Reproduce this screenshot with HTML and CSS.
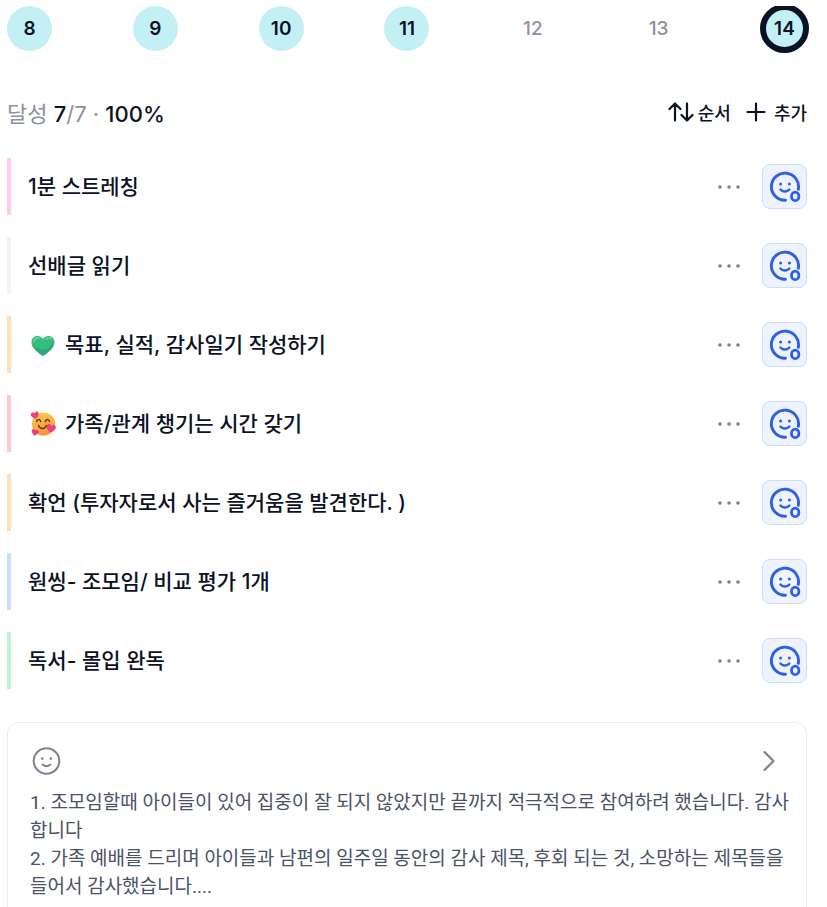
FILE: index.html
```html
<!DOCTYPE html>
<html lang="ko">
  <head>
    <meta charset="UTF-8" />
    <meta name="viewport" content="width=device-width, initial-scale=1.0" />
    <title>루틴</title>
    <link rel="stylesheet" href="styles.css">
  </head>
  <body>
    <!-- Shared icons -->
    <svg class="sprite" aria-hidden="true">
      <symbol id="icon-done" viewBox="0 0 32 32">
        <g fill="none" stroke="currentColor" stroke-linecap="round">
          <path d="M16.500 29.300A13.600 13.600 0 1 1 29.300 18.400" stroke-width="2.900" />
          <path d="M11.500 18.600q4.400 3.800 8.800 0" stroke-width="2.400" />
          <ellipse cx="26.200" cy="25.400" rx="3.700" ry="4.200" stroke-width="2.800" />
        </g>
        <circle cx="11.600" cy="13" r="1.500" fill="currentColor" />
        <circle cx="20.400" cy="13" r="1.500" fill="currentColor" />
      </symbol>
      <symbol id="icon-more" viewBox="0 0 24 6">
        <g fill="currentColor">
          <circle cx="3" cy="3" r="1.8" />
          <circle cx="12" cy="3" r="1.8" />
          <circle cx="21" cy="3" r="1.8" />
        </g>
      </symbol>
    </svg>

    <div class="app">
      <nav class="days">
        <button class="day done">8</button>
        <button class="day done">9</button>
        <button class="day done">10</button>
        <button class="day done">11</button>
        <button class="day">12</button>
        <button class="day">13</button>
        <button class="day done today">14</button>
      </nav>

      <header class="summary">
        <p class="progress">달성 <strong>7</strong>/7 · <strong>100%</strong></p>
        <div class="actions">
          <button class="action">
            <svg width="26" height="20" viewBox="0 0 26 20" fill="none" stroke="currentColor" stroke-width="2.2" stroke-linecap="round" stroke-linejoin="round" aria-hidden="true">
              <path d="M7 18.500V1.500M1.500 7L7 1.500 12.500 7M19 1.500v17M13.500 13l5.500 5.500 5.500-5.500" />
            </svg>
            순서
          </button>
          <button class="action add">
            <svg width="20" height="20" viewBox="0 0 20 20" fill="none" stroke="currentColor" stroke-width="2.2" stroke-linecap="round" aria-hidden="true">
              <path d="M10 1.500v17M1.500 10h17" />
            </svg>
            추가
          </button>
        </div>
      </header>

      <ul class="routines">
        <li class="routine pink">
          <span class="title">1분 스트레칭</span>
          <button class="more" aria-label="더보기"><svg><use href="#icon-more" /></svg></button>
          <button class="check" aria-label="완료"><svg><use href="#icon-done" /></svg></button>
        </li>
        <li class="routine gray">
          <span class="title">선배글 읽기</span>
          <button class="more" aria-label="더보기"><svg><use href="#icon-more" /></svg></button>
          <button class="check" aria-label="완료"><svg><use href="#icon-done" /></svg></button>
        </li>
        <li class="routine orange">
          <svg class="emoji" viewBox="0 0 26 26" aria-hidden="true">
            <path d="M13 24C8.500 21 1.500 16 1.500 10 1.500 3.500 10 2 13 7c3-5 11.500-3.500 11.500 3 0 6-7 11-11.500 14z" fill="#36bd7c" />
            <path d="M13 24C8.500 21 1.500 16 1.500 10.500c2.500 5 7 7 11.500 7s9-3.500 11-9c1.500 7-6.500 12.500-11 15.500z" fill="#299f77" opacity=".7" />
            <path d="M4 9c.8-2.600 3-3.500 5-3M16 7.500c1.500-1.500 3.500-1.800 5-.8" fill="none" stroke="#63d99a" stroke-width="1.600" stroke-linecap="round" />
          </svg>
          <span class="title">목표, 실적, 감사일기 작성하기</span>
          <button class="more" aria-label="더보기"><svg><use href="#icon-more" /></svg></button>
          <button class="check" aria-label="완료"><svg><use href="#icon-done" /></svg></button>
        </li>
        <li class="routine red">
          <svg class="emoji" viewBox="0 0 26 26" aria-hidden="true">
            <defs>
              <linearGradient id="face" x1="0" y1="0" x2="0.300" y2="1">
                <stop offset="0" stop-color="#ffd04d" />
                <stop offset="1" stop-color="#fb9636" />
              </linearGradient>
              <path id="heart" d="M0 3.600C-2 2.300-4 .5-4-1.300-4-3.900-1-4.200 0-2.200 1-4.200 4-3.900 4-1.300 4 .5 2 2.300 0 3.600z" />
            </defs>
            <circle cx="13.500" cy="13" r="11.500" fill="url(#face)" />
            <path d="M6.500 10.500c.6-2.600 3.400-2.600 4.200 0M15.300 10.500c.7-2.600 3.500-2.600 4.200 0M8.500 14.500c1.500 4 6.500 4 8 0" fill="none" stroke="#5e3427" stroke-width="1.500" stroke-linecap="round" />
            <g fill="#ee3f79">
              <use href="#heart" transform="translate(5 4.500) rotate(-12)" />
              <use href="#heart" transform="translate(21 17.500) rotate(12) scale(1.150)" />
              <use href="#heart" transform="translate(5 21.500) rotate(15) scale(.9)" />
            </g>
          </svg>
          <span class="title">가족/관계 챙기는 시간 갖기</span>
          <button class="more" aria-label="더보기"><svg><use href="#icon-more" /></svg></button>
          <button class="check" aria-label="완료"><svg><use href="#icon-done" /></svg></button>
        </li>
        <li class="routine orange">
          <span class="title">확언 (투자자로서 사는 즐거움을 발견한다. )</span>
          <button class="more" aria-label="더보기"><svg><use href="#icon-more" /></svg></button>
          <button class="check" aria-label="완료"><svg><use href="#icon-done" /></svg></button>
        </li>
        <li class="routine blue">
          <span class="title">원씽- 조모임/ 비교 평가 1개</span>
          <button class="more" aria-label="더보기"><svg><use href="#icon-more" /></svg></button>
          <button class="check" aria-label="완료"><svg><use href="#icon-done" /></svg></button>
        </li>
        <li class="routine green">
          <span class="title">독서- 몰입 완독</span>
          <button class="more" aria-label="더보기"><svg><use href="#icon-more" /></svg></button>
          <button class="check" aria-label="완료"><svg><use href="#icon-done" /></svg></button>
        </li>
      </ul>

      <section class="memo">
        <div class="memo-head">
          <svg width="32" height="32" viewBox="0 0 32 32" fill="none" stroke="currentColor" stroke-width="2" stroke-linecap="round" aria-hidden="true">
            <circle cx="16.500" cy="16" r="12.800" />
            <path d="M12.500 19.500q4 3.200 8 0" />
            <path d="M12.300 13.500v.1M20.700 13.500v.1" stroke-width="2.600" />
          </svg>
          <button class="open" aria-label="메모 열기">
            <svg width="14" height="20" viewBox="0 0 14 20" fill="none" stroke="currentColor" stroke-width="2.200" stroke-linecap="round" stroke-linejoin="round" aria-hidden="true">
              <path d="M2.500 1l9 9-9 9" />
            </svg>
          </button>
        </div>
        <p>1. 조모임할때 아이들이 있어 집중이 잘 되지 않았지만 끝까지 적극적으로 참여하려 했습니다. 감사합니다</p>
        <p>2. 가족 예배를 드리며 아이들과 남편의 일주일 동안의 감사 제목, 후회 되는 것, 소망하는 제목들을 들어서 감사했습니다....</p>
      </section>
    </div>
  </body>
</html>
```
FILE: styles.css
```css
* {
  margin: 0;
  padding: 0;
  box-sizing: border-box;
}

body {
  font-family: Inter, "Noto Sans CJK KR", sans-serif;
  color: #0b1226;
  background: #fff;
}

button {
  border: none;
  background: none;
  font: inherit;
  color: inherit;
  cursor: pointer;
}

svg {
  display: block;
  flex: none;
}

.sprite {
  position: absolute;
  width: 0;
  height: 0;
}

.app {
  display: flex;
  flex-direction: column;
  min-height: 100vh;
  padding: 6px 20px 0 7px;
}

/* Day picker */
.days {
  display: flex;
  justify-content: space-between;
  padding-bottom: 4px;
  overflow-y: clip; /* trims the top of the selected ring */
}

.day {
  width: 45px;
  height: 45px;
  border-radius: 50%;
  font-size: 19px;
  font-weight: 500;
  color: #8d919e;
}

.day.done {
  background: #c2f0f5;
  color: #0b1226;
  font-weight: 600;
}

.day.today {
  border: 4px solid #0b1226;
  box-shadow: 0 0 0 2px #0b1226;
}

/* Progress and actions */
.summary {
  display: flex;
  align-items: center;
  justify-content: space-between;
  height: 32px;
  margin: 41px 0 30px;
}

.progress {
  font-size: 22px;
  color: #8d919e;
}

.progress strong {
  color: #0b1226;
  font-weight: 500;
}

.actions {
  display: flex;
  gap: 15px;
}

.action {
  display: flex;
  align-items: center;
  gap: 4px;
  font-size: 18px;
  font-weight: 500;
}

.action.add {
  gap: 8px;
}

/* Routine list */
.routines {
  display: flex;
  flex-direction: column;
  gap: 22px;
  list-style: none;
}

.routine {
  display: flex;
  align-items: center;
  height: 57px;
  padding-left: 17px;
  border-left: 4px solid;
}

.routine.pink { border-color: #ffcbe8; }
.routine.gray { border-color: #f1f3f4; }
.routine.orange { border-color: #ffdfb8; }
.routine.red { border-color: #ffcbc8; }
.routine.blue { border-color: #cbdcff; }
.routine.green { border-color: #bdf1d8; }

.emoji {
  width: 26px;
  height: 26px;
  margin: 0 9px 0 2px;
}

.title {
  flex: 1;
  padding-bottom: 4px;
  font-size: 21px;
  font-weight: 500;
}

.more {
  padding: 12px 21px;
  color: #7d8293;
}

.more svg {
  width: 24px;
  height: 6px;
}

.check {
  display: flex;
  align-items: center;
  justify-content: center;
  width: 45px;
  height: 45px;
  border: 1px solid #cddcfc;
  border-radius: 8px;
  background: #eef3ff;
  color: #2d5fe8;
}

.check svg {
  width: 32px;
  height: 32px;
}

/* Memo card */
.memo {
  flex: 1;
  margin-top: 33px;
  padding: 22px 16px 0 22px;
  border: 1px solid #ececf0;
  border-bottom: none;
  border-radius: 12px 12px 0 0;
  color: #4a5268;
  font-family: Roboto, "Noto Sans CJK KR", sans-serif;
  font-size: 19px;
  line-height: 28px;
}

.memo-head {
  display: flex;
  align-items: center;
  justify-content: space-between;
  margin-bottom: 12px;
  color: #7d8293;
}

.open {
  padding: 4px 14px;
}
```
